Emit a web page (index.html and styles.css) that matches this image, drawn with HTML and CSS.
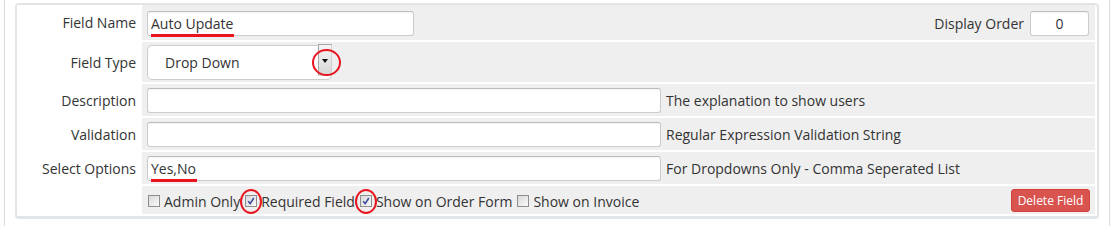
FILE: index.html
```html
<!DOCTYPE html>
<html>
<head>
<meta charset="utf-8">
<link rel="stylesheet" href="styles.css">
</head>
<body>
<div class="page">
  <div class="box">
    <div class="row r1">
      <div class="lbl">Field Name</div>
      <div class="fld">
        <div class="input w-name"><span class="mark">Auto Update</span></div>
        <div class="spacer"></div>
        <span class="txt">Display Order</span>
        <div class="input w-order">0</div>
      </div>
    </div>
    <div class="row r2">
      <div class="lbl">Field Type</div>
      <div class="fld">
        <div class="select">
          <span class="sel-text">Drop Down</span>
          <span class="sel-btn"><span class="arrow"></span><span class="ring ring-sel"></span></span>
        </div>
      </div>
    </div>
    <div class="row r3">
      <div class="lbl">Description</div>
      <div class="fld">
        <div class="input w-wide"></div>
        <span class="help">The explanation to show users</span>
      </div>
    </div>
    <div class="row r3">
      <div class="lbl">Validation</div>
      <div class="fld">
        <div class="input w-wide"></div>
        <span class="help">Regular Expression Validation String</span>
      </div>
    </div>
    <div class="row r3">
      <div class="lbl">Select Options</div>
      <div class="fld">
        <div class="input w-wide"><span class="mark">Yes,No</span></div>
        <span class="help">For Dropdowns Only - Comma Seperated List</span>
      </div>
    </div>
    <div class="row r6">
      <div class="lbl"></div>
      <div class="fld">
        <span class="cb"></span><span class="cbl">Admin Only</span>
        <span class="cb checked"><svg viewBox="0 0 10 10" class="tick"><path d="M2.2 5.2 L4.2 7.6 L7.8 2" /></svg><span class="ring ring-cb"></span></span><span class="cbl">Required Field</span>
        <span class="cb checked"><svg viewBox="0 0 10 10" class="tick"><path d="M2.2 5.2 L4.2 7.6 L7.8 2" /></svg><span class="ring ring-cb"></span></span><span class="cbl">Show on Order Form</span>
        <span class="cb plain"></span><span class="cbl">Show on Invoice</span>
        <div class="spacer"></div>
        <span class="btn-danger">Delete Field</span>
      </div>
    </div>
  </div>
</div>
</body>
</html>
```

FILE: styles.css
```css
html, body {
  margin: 0;
  padding: 0;
  background: #fff;
}
body {
  font-family: "Open Sans", "Liberation Sans", sans-serif;
  font-size: 14px;
  color: #333;
}
.page {
  box-sizing: border-box;
  margin-left: 4px;
  width: 1106px;
  height: 226px;
  border-left: 1px solid #dcdcdc;
  border-right: 1px solid #dcdcdc;
  padding: 3px 10px 0 10px;
}
.box {
  box-sizing: border-box;
  width: 1084px;
  border: 2px solid #e1e5e7;
  border-bottom-width: 3px;
  border-radius: 4px;
  padding: 0 2px 2px 0;
  display: flex;
  flex-direction: column;
  gap: 2px;
  background: #fff;
}
.row {
  display: flex;
}
.r1 { height: 35px; }
.r2 { height: 40px; }
.r3 { height: 32px; }
.r6 { height: 28px; }
.lbl {
  width: 125px;
  flex: none;
  box-sizing: border-box;
  padding-right: 6px;
  text-align: right;
  display: flex;
  align-items: center;
  justify-content: flex-end;
  background: #fff;
  white-space: nowrap;
}
.fld {
  flex: 1;
  background: #efefef;
  display: flex;
  align-items: center;
  padding: 0 6px 0 5px;
}
.spacer { flex: 1; }
.input {
  box-sizing: border-box;
  height: 25px;
  background: #fff;
  border: 1px solid #ccc;
  border-top-color: #bdbdbd;
  border-radius: 3px;
  box-shadow: inset 0 1px 1px rgba(0,0,0,0.05);
  padding: 0 2px;
  line-height: 23px;
  white-space: nowrap;
  margin-top: 2px;
}
.r3 .input { margin-top: 1px; }
.w-name { width: 267px; }
.w-order { width: 59px; text-align: center; margin-left: 6px; }
.w-wide { width: 514px; }
.txt { margin-top: 2px; }
.help { margin-left: 5px; }
.mark {
  position: relative;
  display: inline-block;
  padding-left: 1px;
}
.mark::after {
  content: "";
  position: absolute;
  left: 1px;
  right: -1px;
  bottom: -2px;
  height: 3px;
  background: #e8141e;
}

.select {
  box-sizing: border-box;
  width: 185px;
  height: 35px;
  margin-top: 1px;
  background: #fff;
  border: 1px solid #ccc;
  border-radius: 5px;
  display: flex;
  align-items: flex-start;
}
.sel-text {
  flex: 1;
  padding-left: 17px;
  line-height: 33px;
}
.sel-btn {
  position: relative;
  box-sizing: border-box;
  width: 14px;
  height: 32px;
  margin-top: -2px;
  margin-right: -1px;
  border: 1px solid #a5a5a5;
  border-right-color: #d0d0d0;
  border-bottom-color: #d5d5d5;
  background: linear-gradient(#f6f6f6, #d6d6d6);
  display: flex;
  align-items: center;
  justify-content: center;
}
.arrow {
  width: 0;
  height: 0;
  border-left: 3.5px solid transparent;
  border-right: 3.5px solid transparent;
  border-top: 4px solid #111;
  margin-top: 2px;
}
.ring {
  position: absolute;
  box-sizing: border-box;
  border: 2.5px solid #e8141e;
  border-radius: 50%;
  pointer-events: none;
}
.ring-sel {
  left: -7px;
  top: 4px;
  width: 29px;
  height: 27px;
}

.cb {
  position: relative;
  box-sizing: border-box;
  width: 12px;
  height: 12px;
  flex: none;
  border: 1px solid #8e8e8e;
  background: linear-gradient(135deg, #d8d8d8, #fafafa);
  margin: 2px 4px 0 1px;
}
.cb.checked {
  margin-left: 5px;
  margin-right: 4px;
}
.cb.plain {
  margin-left: 5px;
}
.tick {
  position: absolute;
  left: 0;
  top: 0;
  width: 10px;
  height: 10px;
}
.tick path {
  fill: none;
  stroke: #3f4f9a;
  stroke-width: 1.6;
}
.ring-cb {
  left: -6px;
  top: -7px;
  width: 22px;
  height: 25px;
}
.cbl {
  white-space: nowrap;
  margin-top: 2px;
}
.btn-danger {
  box-sizing: border-box;
  width: 79px;
  height: 23px;
  margin-right: -1px;
  background: #d9534f;
  border: 1px solid #d43f3a;
  border-radius: 3px;
  color: #fff;
  font-size: 12px;
  line-height: 21px;
  text-align: center;
}
```
